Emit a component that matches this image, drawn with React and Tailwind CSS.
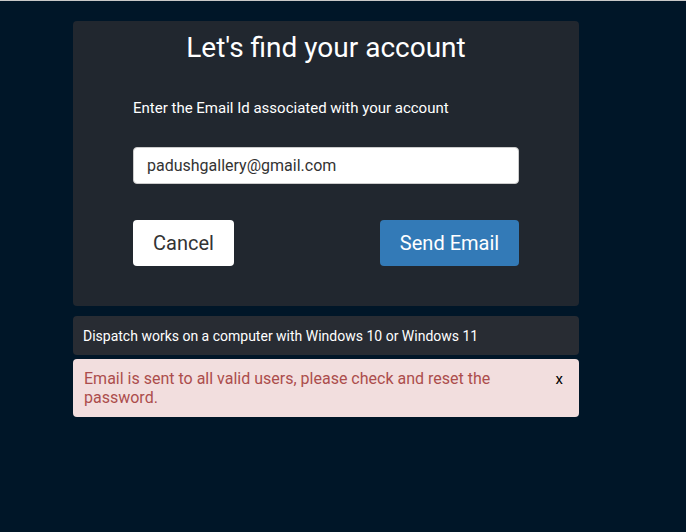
export default function App() {
  return (
    <div className="min-h-[532px] w-full bg-[#001628] border-t border-[#c8c8c8] font-['Roboto',sans-serif]">
      <div className="ml-[73px] w-[506px] pt-[20px]">
        <div className="rounded bg-[#21272f] pt-[11px] pb-[40px]">
          <h1 className="text-center text-[28px] leading-[32px] text-white">Let's find your account</h1>
          <div className="px-[60px]">
            <p className="mt-[35px] text-[15px] leading-[18px] text-white">Enter the Email Id associated with your account</p>
            <input
              type="text"
              defaultValue="padushgallery@gmail.com"
              className="mt-[30px] block h-[37px] w-[386px] rounded border border-[#ccc] bg-white px-[13px] text-[16px] text-[#333] outline-none"
            />
            <div className="mt-[36px] flex w-[386px] justify-between">
              <button className="h-[46px] w-[101px] rounded bg-white text-[20px] text-[#333]">Cancel</button>
              <button className="h-[46px] w-[139px] rounded bg-[#337ab7] text-[20px] text-white">Send Email</button>
            </div>
          </div>
        </div>
        <div className="mt-[10px] flex h-[39px] items-center rounded bg-[#282c33] px-[10px] pt-[1px] text-[14px] text-white">
          Dispatch works on a computer with Windows 10 or Windows 11
        </div>
        <div className="mt-[4px] flex items-start justify-between rounded bg-[#f2dede] py-[10px] pl-[11px] pr-[16px] text-[16px] leading-[19px] text-[#ac4d4c]">
          <p className="w-[420px]">Email is sent to all valid users, please check and reset the password.</p>
          <span className="mt-[1px] text-[15px] text-black">x</span>
        </div>
      </div>
    </div>
  );
}
